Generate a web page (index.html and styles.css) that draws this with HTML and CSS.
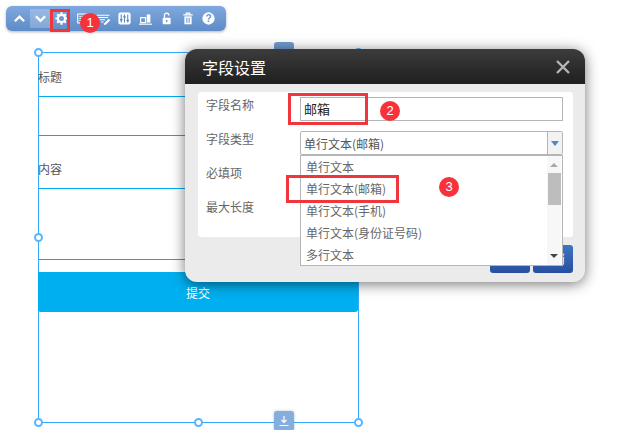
FILE: index.html
```html
<!DOCTYPE html>
<html lang="zh-CN">
<head>
<meta charset="UTF-8">
<title>字段设置</title>
<link rel="stylesheet" href="styles.css">
</head>
<body>
<div class="stage">

  <!-- 表单画布 -->
  <div class="canvas">
    <div class="field-label">标题</div>
    <div class="field-input"></div>
    <div class="field-label label-second">内容</div>
    <div class="field-area"></div>
    <div class="submit">提交</div>
    <i class="handle h-tl"></i><i class="handle h-tr"></i><i class="handle h-ml"></i>
    <i class="handle h-bl"></i><i class="handle h-bm"></i><i class="handle h-br"></i>
    <div class="tab tab-top"></div>
    <div class="tab tab-bottom">
      <svg width="12" height="14" viewBox="0 0 12 14"><path d="M6 1v6M3.5 5L6 7.5 8.5 5M1.5 10.5h9" fill="none" stroke="#fff" stroke-width="1.2"/></svg>
    </div>
  </div>

  <!-- 工具条 -->
  <div class="toolbar">
    <span class="tool"><svg width="13" height="13" viewBox="0 0 14 14"><path d="M2 10l5-5 5 5" fill="none" stroke="#fff" stroke-width="2.4"/></svg></span>
    <span class="tool tool-on"><svg width="13" height="13" viewBox="0 0 14 14"><path d="M2 4.5l5 5 5-5" fill="none" stroke="#fff" stroke-width="2.4"/></svg></span>
    <span class="tool"><svg width="13" height="13" viewBox="0 0 18 18"><circle cx="9" cy="9" r="5" fill="none" stroke="#fff" stroke-width="3"/><path d="M9 0.5v3M9 14.500v3M0.500 9h3M14.500 9h3M3 3l2.200 2.200M12.800 12.800l2.200 2.200M15 3l-2.200 2.200M5.200 12.800l-2.200 2.200" stroke="#fff" stroke-width="3"/></svg></span>
    <span class="tool"><svg width="14" height="13" viewBox="0 0 17 16"><path d="M2 2.5h13v11H2z" fill="none" stroke="#fff" stroke-width="1.3"/><path d="M4 5.500h2M7 5.500h6M4 8h2M7 8h6M4 10.500h2M7 10.500h6" stroke="#fff" stroke-width="1.1"/></svg></span>
    <span class="tool"><svg width="15" height="12" viewBox="0 0 20 16"><path d="M1 3h17M3 6h13M5 9h7M7 12h3" stroke="#fff" stroke-width="1.4"/><path d="M11 13.500l6-6 2 2-6 6h-2.500z" fill="#fff"/></svg></span>
    <span class="tool"><svg width="13" height="13" viewBox="0 0 16 16"><rect x="0.500" y="0.500" width="15" height="15" rx="2.500" fill="#fff"/><path d="M4 3v10M8 3v10M12 3v10" stroke="#5585c2" stroke-width="1.300"/><path d="M2.500 9.500h3M6.500 6h3M10.500 10.500h3" stroke="#5585c2" stroke-width="1.800"/></svg></span>
    <span class="tool"><svg width="13" height="13" viewBox="0 0 16 16"><path d="M2 7h6v6H2z" fill="none" stroke="#fff" stroke-width="1.4"/><path d="M9.500 3h4.500v10H9.500z" fill="#fff"/><path d="M0 15h16" stroke="#fff" stroke-width="1.4"/></svg></span>
    <span class="tool"><svg width="12" height="13" viewBox="0 0 16 18"><rect x="2" y="8" width="11" height="9" rx="1" fill="#fff"/><path d="M4.500 8V4.500a3 3 0 0 1 6 0V5" fill="none" stroke="#fff" stroke-width="1.8"/><rect x="6.500" y="11" width="2" height="3" fill="#6a97d0"/></svg></span>
    <span class="tool"><svg width="12" height="13" viewBox="0 0 16 18"><path d="M1.500 4h13M5.500 4V1.500h5V4" fill="none" stroke="#fff" stroke-width="1.5"/><path d="M3 6h10v11H3z" fill="#fff"/><path d="M6 8v7M8 8v7M10 8v7" stroke="#6a97d0" stroke-width="1"/></svg></span>
    <span class="tool"><svg width="13" height="13" viewBox="0 0 18 18"><circle cx="9" cy="9" r="8.500" fill="#fff"/><text x="9" y="14" text-anchor="middle" class="help-mark">?</text></svg></span>
  </div>

  <!-- 字段设置弹窗 -->
  <div class="dialog">
    <div class="dialog-head">
      <span>字段设置</span>
      <svg width="16" height="16" viewBox="0 0 16 16"><path d="M2 2l12 12M14 2L2 14" stroke="#b5b5b5" stroke-width="2.4"/></svg>
    </div>
    <div class="dialog-body">
      <div class="panel">
        <div class="row">
          <label>字段名称</label>
          <div class="text-box">邮箱</div>
        </div>
        <div class="row">
          <label>字段类型</label>
          <div class="select-box">
            <span>单行文本(邮箱)</span>
            <span class="select-btn"><svg width="8" height="5" viewBox="0 0 8 5"><path d="M0 0h8L4 5z" fill="#4a8ac4"/></svg></span>
          </div>
        </div>
        <div class="row"><label>必填项</label></div>
        <div class="row"><label>最大长度</label></div>
      </div>
      <div class="dialog-foot">
        <span class="btn">确定</span>
        <span class="btn">取消</span>
      </div>
    </div>
    <div class="dropdown">
      <ul>
        <li>单行文本</li>
        <li>单行文本(邮箱)</li>
        <li>单行文本(手机)</li>
        <li>单行文本(身份证号码)</li>
        <li>多行文本</li>
      </ul>
      <div class="scrollbar">
        <svg width="8" height="4" viewBox="0 0 8 4"><path d="M0 4h8L4 0z" fill="#a9a9a9"/></svg>
        <div class="scroll-thumb"></div>
        <svg class="scroll-down" width="8" height="4" viewBox="0 0 8 4"><path d="M0 0h8L4 4z" fill="#444"/></svg>
      </div>
    </div>
  </div>

  <!-- 标注 -->
  <div class="mark mark-gear"></div>
  <div class="mark mark-name"></div>
  <div class="mark mark-type"></div>
  <div class="badge badge-1">1</div>
  <div class="badge badge-2">2</div>
  <div class="badge badge-3">3</div>
</div>
</body>
</html>
```

FILE: styles.css
```css
html, body {
  margin: 0;
  padding: 0;
  background: #fff;
}
body {
  font-family: "Noto Sans CJK SC", "Liberation Sans", sans-serif;
  font-size: 12px;
  color: #666;
}
.stage {
  position: relative;
  width: 629px;
  height: 430px;
  overflow: hidden;
}

/* 表单画布 */
.canvas {
  position: relative;
  box-sizing: border-box;
  width: 321px;
  height: 371px;
  margin: 52px 0 0 38px;
  border: 1px solid #33aaff;
  display: flex;
  flex-direction: column;
}
.field-label {
  height: 43px;
  margin-left: -1px;
  padding-top: 15px;
  box-sizing: border-box;
  line-height: 18px;
  color: #555;
}
.field-input {
  height: 38px;
  border-top: 1px solid #00aeef;
  border-bottom: 1px solid #00aeef;
}
.label-second {
  height: 52px;
  padding-top: 24px;
}
.field-area {
  height: 70px;
  border-top: 1px solid #00aeef;
  border-bottom: 1px solid #00aeef;
}
.submit {
  height: 40px;
  margin: 12px 0 0 -1px;
  background: #00aff0;
  border-radius: 0 0 3px 3px;
  color: #fff;
  line-height: 42px;
  text-align: center;
}
.handle {
  position: absolute;
  box-sizing: border-box;
  width: 9px;
  height: 9px;
  background: #fff;
  border: 2px solid #55b5ff;
  border-radius: 50%;
}
.h-tl { left: -5px; top: -5px; }
.h-tr { right: -5px; top: -5px; }
.h-ml { left: -5px; top: 180px; }
.h-bl { left: -5px; bottom: -5px; }
.h-bm { left: 155px; bottom: -5px; }
.h-br { right: -5px; bottom: -5px; }
.tab {
  position: absolute;
  width: 20px;
  height: 20px;
  left: 235px;
  background: #86aedd;
  border-radius: 3px;
  display: flex;
  align-items: flex-start;
  justify-content: center;
}
.tab-top { top: -11px; background: #6f9bd0; }
.tab-bottom {
  bottom: -9px;
  padding-top: 4px;
  box-sizing: border-box;
  box-shadow: 0 0 3px rgba(0, 0, 0, 0.25);
}

/* 工具条 */
.toolbar {
  position: absolute;
  left: 6px;
  top: 6px;
  width: 220px;
  height: 25px;
  padding: 3px 0 0 3px;
  box-sizing: border-box;
  background: linear-gradient(180deg, #7fa9de 0%, #5e8cc8 100%);
  border-radius: 6px;
  box-shadow: 0 1px 3px rgba(0, 0, 0, 0.3);
  display: flex;
}
.tool {
  width: 21px;
  height: 19px;
  flex: none;
  display: flex;
  align-items: center;
  justify-content: center;
}
.tool-on { background: rgba(255, 255, 255, 0.22); }
.help-mark {
  font-family: "Liberation Sans", sans-serif;
  font-size: 14px;
  font-weight: 700;
  fill: #6a97d0;
}

/* 弹窗 */
.dialog {
  position: absolute;
  left: 185px;
  top: 49px;
  width: 400px;
  height: 233px;
  border-radius: 12px;
  background: #ebebeb;
  box-shadow: 0 2px 14px rgba(0, 0, 0, 0.55);
}
.dialog-head {
  height: 35px;
  padding: 0 14px 0 17px;
  background: linear-gradient(180deg, #3c3c3c 0%, #1f1f1f 100%);
  border-radius: 12px 12px 0 0;
  color: #fff;
  font-size: 16px;
  display: flex;
  align-items: center;
  justify-content: space-between;
}
.dialog-body {
  padding: 8px 12px 0 13px;
}
.panel {
  height: 145px;
  box-sizing: border-box;
  padding-top: 5px;
  background: #fff;
  border-radius: 3px;
}
.row {
  height: 34px;
  display: flex;
  align-items: flex-start;
}
.row label {
  width: 102px;
  padding-left: 8px;
  box-sizing: border-box;
  line-height: 16px;
  color: #666;
}
.text-box, .select-box {
  box-sizing: border-box;
  width: 263px;
  height: 24px;
  border: 1px solid #b5b5b5;
  background: #fff;
  color: #555;
  display: flex;
  align-items: center;
}
.text-box {
  padding: 0 0 2px 3px;
  font-size: 13px;
  color: #222;
}
.select-box {
  padding-left: 3px;
  justify-content: space-between;
  border-radius: 2px;
}
.select-btn {
  width: 14px;
  height: 22px;
  border-left: 1px solid #b5b5b5;
  background: #f2f2f2;
  display: flex;
  align-items: center;
  justify-content: center;
}
.dialog-foot {
  padding: 8px 0 0 292px;
  display: flex;
  gap: 3px;
}
.btn {
  width: 40px;
  height: 28px;
  background: linear-gradient(180deg, #3f74c0 0%, #26509f 100%);
  border-radius: 3px;
  color: #fff;
  line-height: 28px;
  text-align: center;
}

/* 下拉列表 */
.dropdown {
  position: absolute;
  left: 115px;
  top: 106px;
  width: 263px;
  height: 111px;
  box-sizing: border-box;
  border: 1px solid #b5b5b5;
  background: #fff;
  display: flex;
  justify-content: space-between;
}
.dropdown ul {
  list-style: none;
  margin: 0;
  padding: 0 0 0 5px;
}
.dropdown li {
  height: 22px;
  line-height: 22px;
  color: #666;
}
.scrollbar {
  width: 14px;
  margin-right: 1px;
  background: #f7f7f7;
  display: flex;
  flex-direction: column;
  align-items: center;
  padding-top: 7px;
  box-sizing: border-box;
}
.scroll-thumb {
  width: 13px;
  height: 32px;
  margin-top: 6px;
  background: #bdbdbd;
}
.scroll-down { margin-top: auto; margin-bottom: 7px; }

/* 标注 */
.mark {
  position: absolute;
  box-sizing: border-box;
  border: 3px solid #f0353b;
}
.mark-gear { left: 50px; top: 9px; width: 20px; height: 23px; }
.mark-name { left: 288px; top: 93px; width: 80px; height: 32px; }
.mark-type { left: 286px; top: 175px; width: 113px; height: 28px; }
.badge {
  position: absolute;
  width: 20px;
  height: 20px;
  border-radius: 50%;
  background: #f7323a;
  color: #fff;
  font-family: "Liberation Sans", sans-serif;
  font-size: 13px;
  line-height: 20px;
  text-align: center;
}
.badge-1 { left: 80px; top: 13px; }
.badge-2 { left: 380px; top: 101px; }
.badge-3 { left: 439px; top: 177px; }
```
